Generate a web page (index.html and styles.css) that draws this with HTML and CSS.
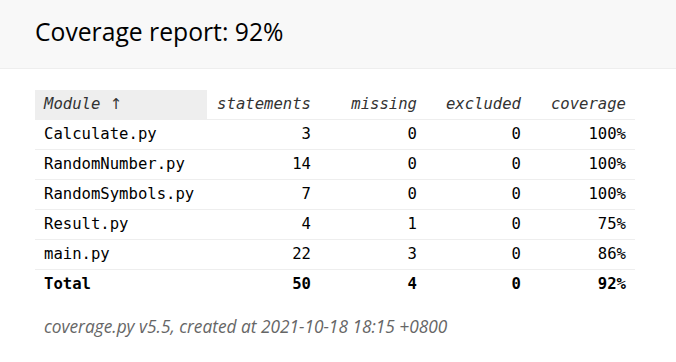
FILE: index.html
```html
<!DOCTYPE html>
<html>
<head>
<meta charset="utf-8">
<title>Coverage report</title>
<link rel="stylesheet" href="styles.css">
</head>
<body>
<header class="header">
  <h1 class="title">Coverage report: <span class="pc">92%</span></h1>
</header>
<main class="index">
  <table class="report">
    <colgroup>
      <col class="c-name">
      <col class="c-stmts">
      <col class="c-miss">
      <col class="c-excl">
      <col class="c-cov">
    </colgroup>
    <thead>
      <tr>
        <th class="name sorted">Module <span class="arrow">↑</span></th>
        <th class="num">statements</th>
        <th class="num">missing</th>
        <th class="num">excluded</th>
        <th class="num">coverage</th>
      </tr>
    </thead>
    <tbody>
      <tr><td class="name">Calculate.py</td><td class="num">3</td><td class="num">0</td><td class="num">0</td><td class="num">100%</td></tr>
      <tr><td class="name">RandomNumber.py</td><td class="num">14</td><td class="num">0</td><td class="num">0</td><td class="num">100%</td></tr>
      <tr><td class="name">RandomSymbols.py</td><td class="num">7</td><td class="num">0</td><td class="num">0</td><td class="num">100%</td></tr>
      <tr><td class="name">Result.py</td><td class="num">4</td><td class="num">1</td><td class="num">0</td><td class="num">75%</td></tr>
      <tr><td class="name">main.py</td><td class="num">22</td><td class="num">3</td><td class="num">0</td><td class="num">86%</td></tr>
    </tbody>
    <tfoot>
      <tr class="total"><td class="name">Total</td><td class="num">50</td><td class="num">4</td><td class="num">0</td><td class="num">92%</td></tr>
    </tfoot>
  </table>
</main>
<footer class="footer">
  <p class="stamp">coverage.py v5.5, created at 2021-10-18 18:15 +0800</p>
</footer>
</body>
</html>
```
FILE: styles.css
```css
html, body { margin: 0; padding: 0; }
body {
  font-family: "Open Sans", "Noto Sans", sans-serif;
  background: #fff;
  color: #000;
}
.header {
  background: #f8f8f8;
  border-bottom: 1px solid #eee;
  height: 69px;
  box-sizing: border-box;
  padding: 17px 35px 0;
}
.title {
  margin: 0;
  font-size: 24.7px;
  font-weight: normal;
  line-height: 30px;
}
.index {
  padding: 21px 0 0 35px;
}
.report {
  border-collapse: collapse;
  table-layout: fixed;
  width: 600px;
  font-family: "DejaVu Sans Mono", "Liberation Mono", monospace;
  font-size: 15.6px;
}
.c-name { width: 172px; }
.c-stmts { width: 113px; }
.c-miss { width: 106px; }
.c-excl { width: 104px; }
.c-cov { width: 105px; }
.report th, .report td {
  height: 30px;
  padding: 0 9px;
  border-bottom: 1px solid #eee;
  text-align: right;
  white-space: nowrap;
  box-sizing: border-box;
}
.report th {
  height: 29px;
  font-weight: normal;
  font-style: italic;
  color: #333;
}
.report .name { text-align: left; }
.report .sorted { background: #eee; }
.report .arrow {
  font-family: "DejaVu Sans", sans-serif;
  font-style: normal;
  font-size: 15px;
}
.total td {
  font-weight: bold;
  border-bottom: none;
}
.footer {
  padding: 16px 44px;
}
.stamp {
  margin: 0;
  color: #666;
  font-style: italic;
  font-size: 17.3px;
}
```
